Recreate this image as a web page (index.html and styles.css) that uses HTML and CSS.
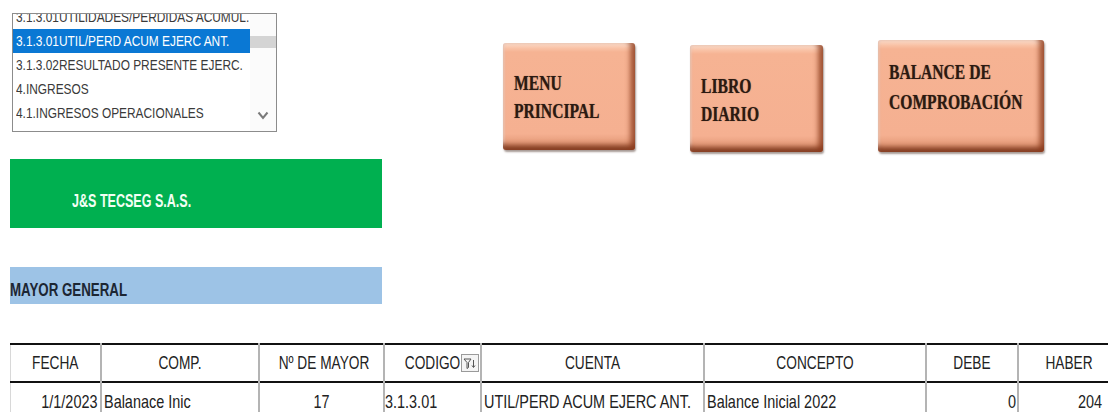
FILE: index.html
```html
<!DOCTYPE html>
<html>
<head>
  <title>Mayor General</title>
<link rel="stylesheet" href="styles.css">
</head>
<body>
  <div class="top">
    <div class="listbox">
      <div class="list-items">
        <div class="item"><span class="sq">3.1.3.01UTILIDADES/PERDIDAS ACUMUL.</span></div>
        <div class="item selected"><span class="sq">3.1.3.01UTIL/PERD ACUM EJERC ANT.</span></div>
        <div class="item"><span class="sq">3.1.3.02RESULTADO PRESENTE EJERC.</span></div>
        <div class="item"><span class="sq">4.INGRESOS</span></div>
        <div class="item"><span class="sq">4.1.INGRESOS OPERACIONALES</span></div>
      </div>
      <div class="scrollbar">
        <div class="thumb"></div>
        <svg class="arrow" width="12" height="9" viewBox="0 0 12 9">
          <polyline points="1.5,1.5 6,7 10.5,1.5" fill="none" stroke="#7a7a7a" stroke-width="2"/>
        </svg>
      </div>
    </div>

    <div class="buttons">
      <div class="btn btn-menu"><span class="sq">MENU<br>PRINCIPAL</span></div>
      <div class="btn btn-libro"><span class="sq">LIBRO<br>DIARIO</span></div>
      <div class="btn btn-balance"><span class="sq">BALANCE DE<br>COMPROBACIÓN</span></div>
    </div>
  </div>

  <div class="company"><span class="sq">J&amp;S TECSEG S.A.S.</span></div>

  <div class="title"><span class="sq">MAYOR GENERAL</span></div>

  <table class="ledger">
    <colgroup>
      <col style="width: 90px">
      <col style="width: 158px">
      <col style="width: 125px">
      <col style="width: 97px">
      <col style="width: 223px">
      <col style="width: 222px">
      <col style="width: 92px">
      <col style="width: 101px">
    </colgroup>
    <tr class="head">
      <th class="first"><span class="cell c">FECHA</span></th>
      <th><span class="cell c">COMP.</span></th>
      <th><span class="cell c">Nº DE MAYOR</span></th>
      <th class="codigo"><span class="cell c">CODIGO</span>
        <span class="filter">
          <svg width="13" height="13" viewBox="0 0 13 13">
            <path d="M1 2h7L5.5 5.5v5L4 11.5V5.5z" fill="none" stroke="#555" stroke-width="1"/>
            <path d="M10.5 3v7M9 8.5l1.5 2 1.5-2" fill="none" stroke="#555" stroke-width="1"/>
          </svg>
        </span>
      </th>
      <th><span class="cell c">CUENTA</span></th>
      <th><span class="cell c">CONCEPTO</span></th>
      <th><span class="cell c">DEBE</span></th>
      <th><span class="cell c">HABER</span></th>
    </tr>
    <tr class="row">
      <td class="first"><span class="cell r">1/1/2023</span></td>
      <td><span class="cell l">Balanace Inic</span></td>
      <td><span class="cell c">17</span></td>
      <td class="tight"><span class="cell l">3.1.3.01</span></td>
      <td><span class="cell l">UTIL/PERD ACUM EJERC ANT.</span></td>
      <td><span class="cell l">Balance Inicial 2022</span></td>
      <td class="tight-r"><span class="cell r">0</span></td>
      <td class="haber"><span class="cell r">204</span></td>
    </tr>
  </table>
</body>
</html>
```

FILE: styles.css
```css
body {
  margin: 0;
  width: 1108px;
  height: 412px;
  overflow: hidden;
  background-color: #fff;
  font-family: "Liberation Sans", Arial, sans-serif;
  color: #222;
}

/* texto angosto como en la hoja de calculo */
.sq {
  display: inline-block;
  transform-origin: left center;
  white-space: nowrap;
}

.top {
  display: flex;
  align-items: flex-start;
  height: 159px;
}

/* lista desplegable de cuentas */
.listbox {
  display: flex;
  margin-top: 13px;
  margin-left: 12px;
  width: 265px;
  height: 119px;
  box-sizing: border-box;
  border: 1px solid #8c8c8c;
  overflow: hidden;
  background-color: #fff;
}

.list-items {
  flex: 1;
  min-width: 0;
  overflow: hidden;
  margin-top: -9px;
}

.item {
  height: 24px;
  line-height: 24px;
  padding-left: 3px;
  font-size: 14.5px;
  color: #3a3a3a;
  white-space: nowrap;
}

.item .sq {
  transform: scaleX(0.82);
}

.item.selected {
  background-color: #0a78d4;
  color: #fff;
}

.scrollbar {
  flex: none;
  display: flex;
  flex-direction: column;
  justify-content: space-between;
  align-items: center;
  width: 26px;
  background-color: #fbfbfb;
}

.thumb {
  margin-top: 22px;
  width: 100%;
  height: 12px;
  background-color: #d4d4d4;
}

.arrow {
  margin-bottom: 11px;
}

/* botones de navegacion */
.buttons {
  display: flex;
  align-items: flex-start;
  gap: 55px;
  margin-left: 226px;
}

.btn {
  box-sizing: border-box;
  padding-left: 11px;
  font-family: "Liberation Serif", serif;
  font-weight: bold;
  font-size: 20px;
  line-height: 28px;
  color: #2b1a12;
  text-shadow: 0 0 1px rgba(60, 30, 20, 0.6);
  background: linear-gradient(#fde2d3 0, #f9c3a7 5px, #f6b393 9px, #f5b091 85%, #d88a67 100%);
  border-radius: 3px;
  box-shadow:
    inset -7px 0 5px -2px rgba(140, 60, 30, 0.75),
    inset 0 -7px 5px -2px rgba(120, 50, 25, 0.85),
    inset 3px 0 3px -2px rgba(255, 235, 225, 0.9),
    1px 2px 2px rgba(60, 30, 20, 0.45);
}

.btn .sq {
  transform: scaleX(0.78);
}

.btn-menu {
  margin-top: 43px;
  width: 132px;
  height: 107px;
  padding-top: 26px;
}

.btn-libro {
  margin-top: 45px;
  width: 133px;
  height: 107px;
  padding-top: 27px;
}

.btn-balance {
  margin-top: 40px;
  width: 166px;
  height: 112px;
  padding-top: 17px;
  line-height: 30px;
}

/* encabezados */
.company {
  margin-left: 10px;
  width: 372px;
  height: 69px;
  box-sizing: border-box;
  padding-top: 31px;
  padding-left: 62px;
  line-height: 22px;
  font-size: 19px;
  font-weight: bold;
  color: #f2fff4;
  background-color: #00b050;
}

.company .sq {
  transform: scaleX(0.66);
}

.title {
  margin-top: 39px;
  margin-left: 10px;
  width: 372px;
  height: 37px;
  box-sizing: border-box;
  padding-top: 12px;
  line-height: 22px;
  font-size: 19px;
  font-weight: bold;
  color: #1c2633;
  background-color: #9dc3e6;
}

.title .sq {
  transform: scaleX(0.7);
}

/* tabla del mayor */
.ledger {
  margin-top: 39px;
  margin-left: 10px;
  width: 1108px;
  table-layout: fixed;
  border-collapse: collapse;
  font-size: 19px;
}

.ledger th,
.ledger td {
  border-left: 2px solid #b4b4b4;
  padding: 0 2px;
  white-space: nowrap;
  overflow: hidden;
}

.ledger .first {
  border-left: 1px solid #d8d8d8;
}

.cell {
  display: block;
}

.cell.c {
  text-align: center;
  transform-origin: center;
}

.cell.l {
  text-align: left;
  transform-origin: left center;
}

.cell.r {
  text-align: right;
  transform-origin: right center;
}

.head {
  height: 38px;
  border-top: 2px solid #111;
  border-bottom: 2px solid #111;
}

.head th {
  font-weight: normal;
  color: #222;
}

.head .cell {
  transform: scaleX(0.72);
}

.codigo {
  position: relative;
  padding-right: 20px;
}

.filter {
  position: absolute;
  right: 1px;
  top: 9px;
  width: 18px;
  height: 18px;
  box-sizing: border-box;
  border: 1px solid #9a9a9a;
  background-color: #f4f4f4;
  display: flex;
  align-items: center;
  justify-content: center;
}

.row {
  height: 38px;
}

.row td {
  color: #222;
}

.row .cell {
  transform: scaleX(0.76);
}

.ledger .tight {
  padding-left: 0;
}

.ledger .tight-r {
  padding-right: 1px;
}

.ledger .haber {
  padding-right: 17px;
}
```
